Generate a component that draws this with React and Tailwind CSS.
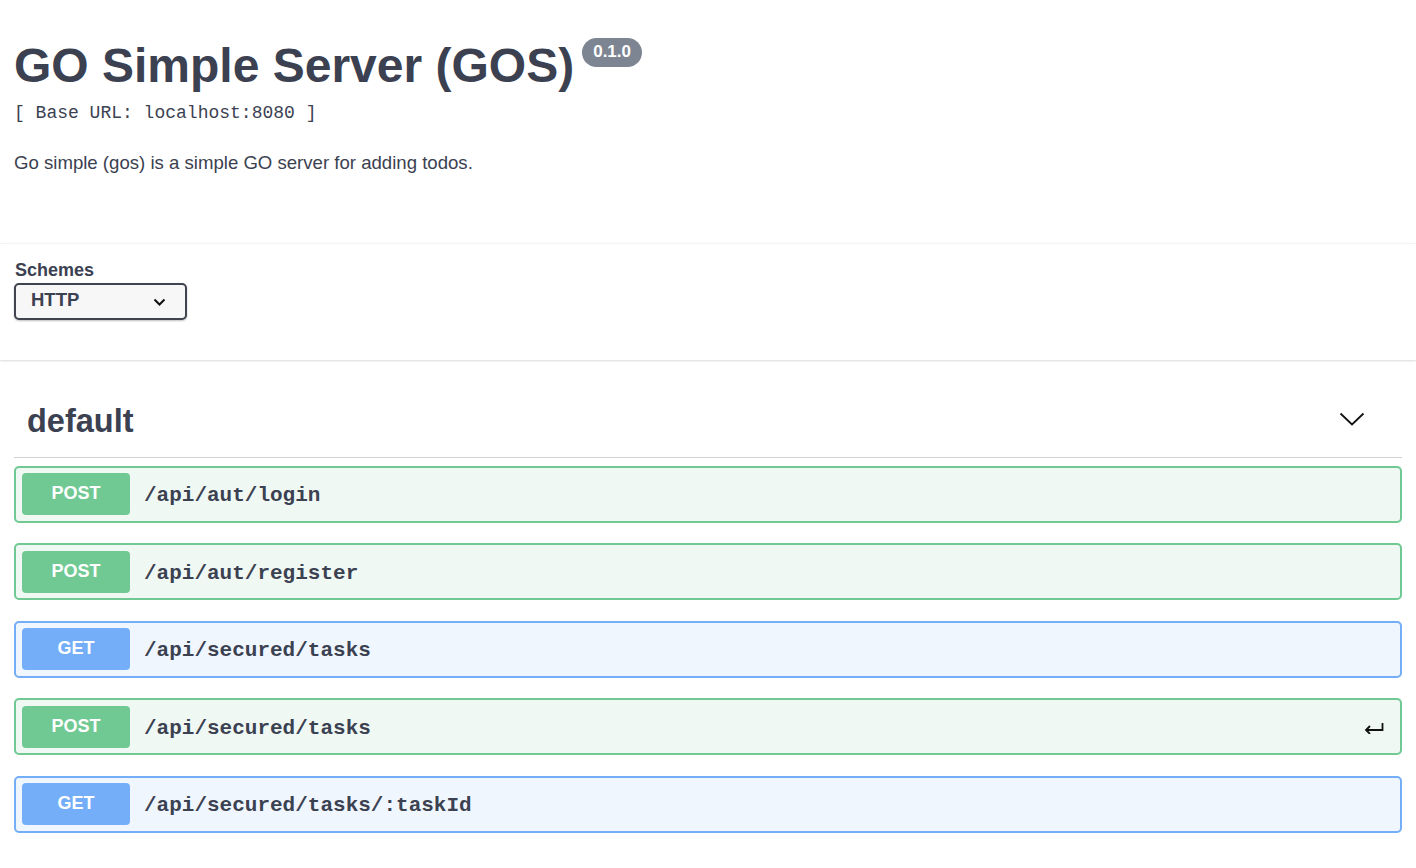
import React from "react";

const ops = [
  { method: "POST", path: "/api/aut/login" },
  { method: "POST", path: "/api/aut/register" },
  { method: "GET", path: "/api/secured/tasks" },
  { method: "POST", path: "/api/secured/tasks", ret: true },
  { method: "GET", path: "/api/secured/tasks/:taskId" },
];

function Op({ method, path, ret }) {
  const post = method === "POST";
  return (
    <div
      className={
        post
          ? "flex items-center h-[57px] border-2 border-[#70c993] bg-[#eff8f3] rounded-[5px] px-[6px]"
          : "flex items-center h-[57px] border-2 border-[#74aef8] bg-[#eff6fe] rounded-[5px] px-[6px]"
      }
    >
      <div
        className={
          post
            ? "w-[108px] h-[42px] rounded-[4px] bg-[#70c993] flex items-center justify-center text-white font-bold text-[18px] leading-none pb-[2px]"
            : "w-[108px] h-[42px] rounded-[4px] bg-[#74aef8] flex items-center justify-center text-white font-bold text-[18px] leading-none pb-[2px]"
        }
      >
        {method}
      </div>
      <div className="ml-[14px] mt-[3px] font-['Liberation_Mono',monospace] font-bold text-[21px] text-[#3b4151] leading-none">
        {path}
      </div>
      {ret && (
        <div className="ml-auto mr-[10px] mt-[2px]">
          <svg width="20" height="12" viewBox="0 0 20 12" fill="none" stroke="#111" strokeWidth="1.8">
            <path d="M18.5 1 V8 H2" />
            <path d="M6 4 L2 8 L6 12" />
          </svg>
        </div>
      )}
    </div>
  );
}

export default function App() {
  return (
    <div className="w-[1416px] min-h-[868px] bg-white text-[#3b4151] font-['Liberation_Sans',Arial,sans-serif]">
      <div className="px-[14px] pt-[42px]">
        <div className="flex items-start">
          <h2 className="text-[48px] font-bold leading-none">GO Simple Server (GOS)</h2>
          <span className="ml-[8px] -mt-[4px] h-[29px] px-[11px] rounded-full bg-[#7d8492] text-white font-bold text-[17px] leading-none flex items-center pb-[2px]">
            0.1.0
          </span>
        </div>
        <div className="mt-[12px] font-['Liberation_Mono',monospace] text-[18px] leading-[22px] text-[#3b4151]">
          [ Base URL: localhost:8080 ]
        </div>
        <p className="mt-[27px] text-[18.6px] leading-[24px]">Go simple (gos) is a simple GO server for adding todos.</p>
      </div>

      <div className="mt-[68px] border-t border-[#f3f3f3] shadow-[0_1px_2px_0_rgba(0,0,0,0.15)] px-[14px] pt-[16px] pb-[40px]">
        <div className="text-[18px] font-bold leading-[20px] pl-[1px]">Schemes</div>
        <div className="mt-[3px] w-[173px] h-[37px] border-2 border-[#41444e] rounded-[5px] bg-[#f7f7f7] shadow-[0_1px_2px_0_rgba(0,0,0,0.25)] flex items-center justify-between pl-[15px] pr-[19px] pb-[3px]">
          <span className="text-[18.5px] font-bold leading-none">HTTP</span>
          <svg width="13" height="8" viewBox="0 0 13 8" fill="none" stroke="#111" strokeWidth="2" className="mt-[4px]">
            <path d="M1.5 1.5 L6.5 6.5 L11.5 1.5" />
          </svg>
        </div>
      </div>

      <div className="px-[14px] pt-[45px]">
        <div className="flex items-center justify-between border-b border-[#d0d2d6] pb-[19px] pl-[13px] pr-[37px]">
          <h3 className="text-[32.5px] font-bold leading-none">default</h3>
          <svg width="26" height="16" viewBox="0 0 26 16" fill="none" stroke="#111" strokeWidth="1.8" className="-mt-[4px]">
            <path d="M1.5 2.5 L13 13.5 L24.5 2.5" />
          </svg>
        </div>
        <div className="mt-[8px] flex flex-col gap-[20.5px]">
          {ops.map((o, i) => (
            <Op key={i} {...o} />
          ))}
        </div>
      </div>
    </div>
  );
}
